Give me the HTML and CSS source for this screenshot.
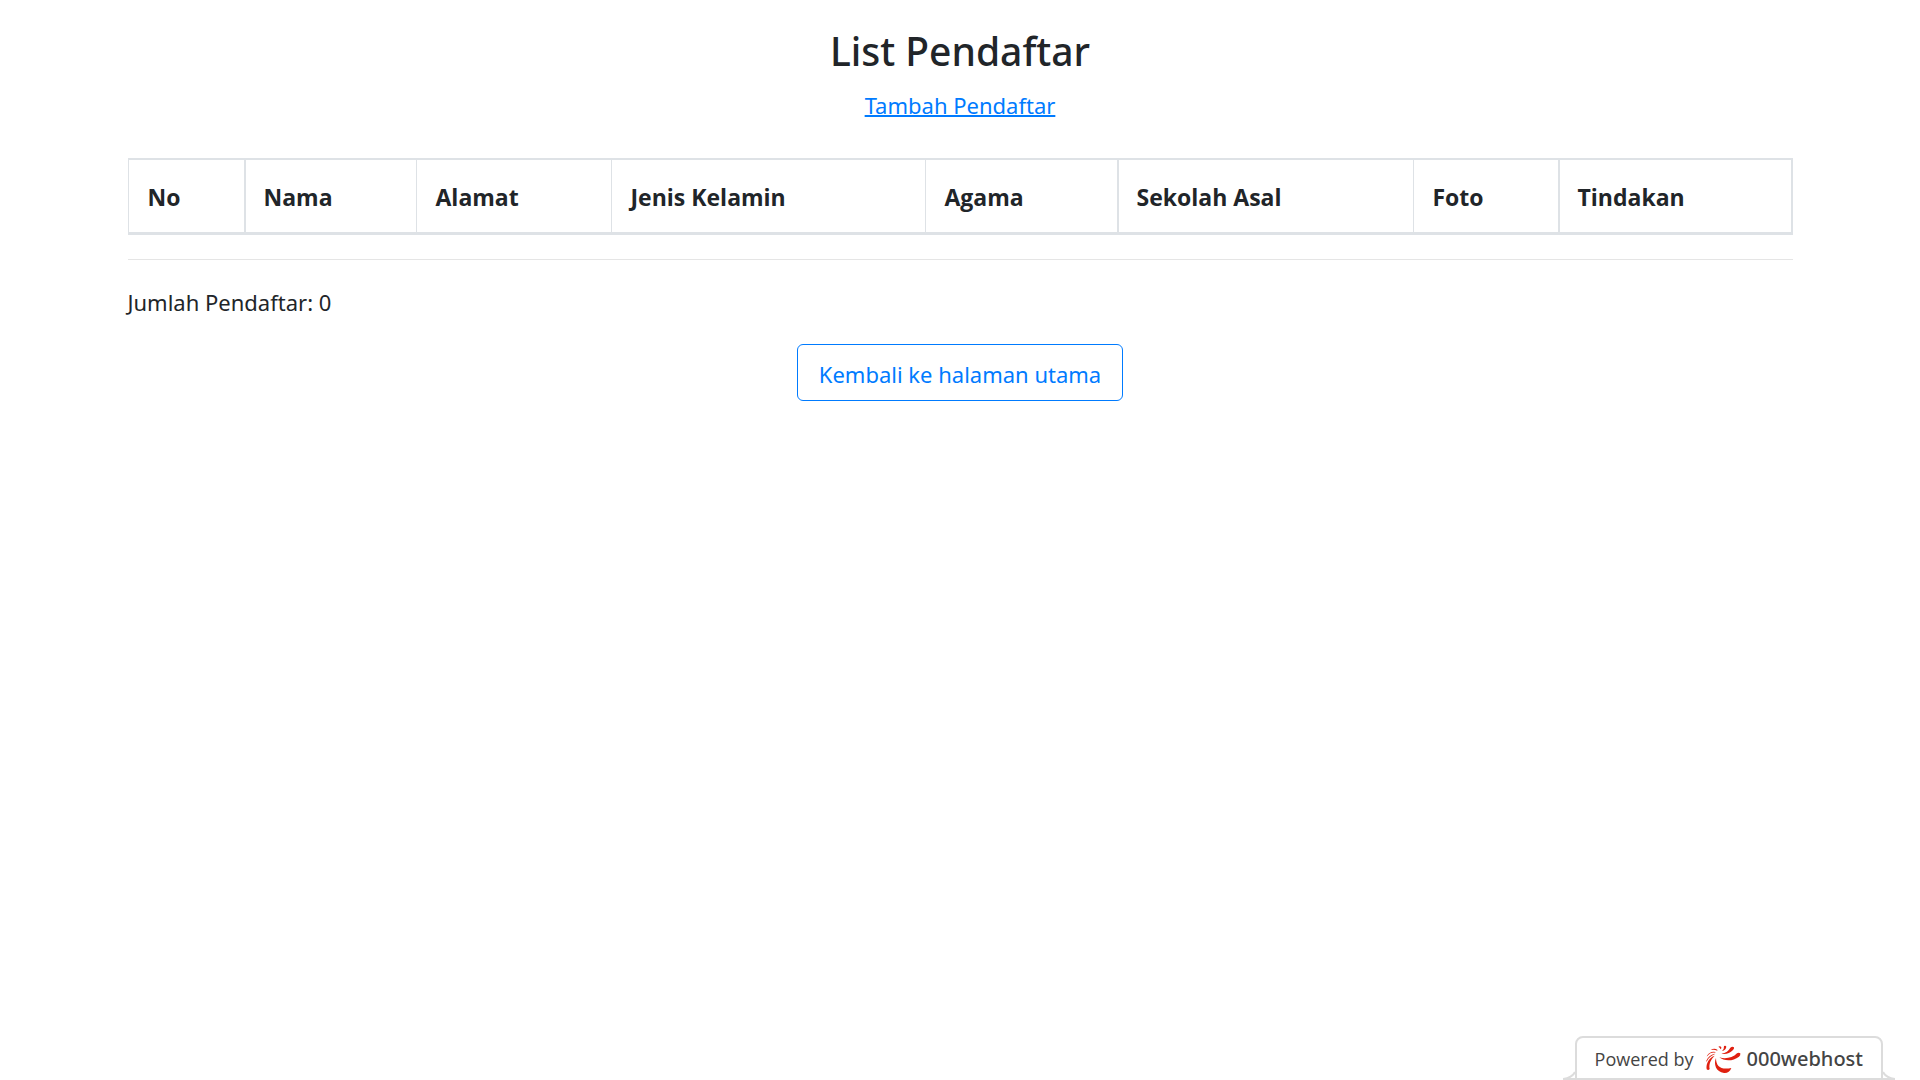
FILE: index.html
```html
<!DOCTYPE html>
<html lang="id">
<head>
<meta charset="utf-8">
<meta name="viewport" content="width=device-width, initial-scale=1">
<title>List Pendaftar</title>
<link rel="stylesheet" href="styles.css">
</head>
<body>
<main class="container">
  <header class="page-header">
    <h1 class="title">List Pendaftar</h1>
    <a class="add-link" href="#tambah">Tambah Pendaftar</a>
  </header>
  <table class="table">
    <colgroup>
      <col class="col-no"><col class="col-nama"><col class="col-alamat"><col class="col-kelamin">
      <col class="col-agama"><col class="col-sekolah"><col class="col-foto"><col class="col-tindakan">
    </colgroup>
    <thead>
      <tr>
        <th scope="col">No</th>
        <th scope="col" class="strong">Nama</th>
        <th scope="col">Alamat</th>
        <th scope="col">Jenis Kelamin</th>
        <th scope="col">Agama</th>
        <th scope="col" class="strong">Sekolah Asal</th>
        <th scope="col">Foto</th>
        <th scope="col" class="strong">Tindakan</th>
      </tr>
    </thead>
  </table>
  <hr class="divider">
  <p class="total">Jumlah Pendaftar: 0</p>
  <div class="actions">
    <button class="btn" type="button">Kembali ke halaman utama</button>
  </div>
</main>
<a class="badge" href="#hosting">
  <svg class="flare" viewBox="0 0 12 44" aria-hidden="true"><path d="M0 43Q9 42 12 36V43z" fill="#fff"/><path d="M0 43H12M0 43Q9 42 12 36" fill="none" stroke="#dcdcdc" stroke-width="2"/></svg>
  <span class="badge-body">
    <span class="powered">Powered by</span>
    <svg class="logo" viewBox="470 70 108 90" aria-hidden="true" fill="#e02010">
      <path d="M503 112C503 138 518 148 549 142C545 153 537 158 527 157C503 154 495 130 503 112z"/>
      <path d="M499 105C487 117 481 130 484 145Q480 150 475 146C472 128 483 110 499 105z"/>
      <path d="M513 110C530 116 553 112 566 98Q571 94 576 98Q577 105 572 108C553 123 526 121 513 110z"/>
      <path d="M519 99C532 97 542 90 546 81Q552 76 557 80Q558 85 554 88C544 98 532 102 519 99z"/>
      <path d="M521 91Q528 86 527 76Q532 73 534 78Q533 88 521 91z"/>
      <path d="M516 86Q517 81 510 78Q516 75 519 80Q520 84 516 86z"/>
      <path d="M507 87Q497 81 487 88Q497 85 507 90z"/>
      <path d="M501 94Q486 91 477 104Q474 109 477 106Q487 94 501 96z"/>
      <path d="M499 99Q481 104 474 120Q473 126 476 121Q483 107 499 101z"/>
    </svg>
    <span class="brand">000webhost</span>
  </span>
  <svg class="flare" viewBox="0 0 12 44" aria-hidden="true"><path d="M12 43Q3 42 0 36V43z" fill="#fff"/><path d="M12 43H0M12 43Q3 42 0 36" fill="none" stroke="#dcdcdc" stroke-width="2"/></svg>
</a>
</body>
</html>
```
FILE: styles.css
```css
* { box-sizing: border-box; }
body {
  margin: 0;
  background: #fff;
  color: #212529;
  font: 400 22px/36px "Noto Sans", "Open Sans", sans-serif;
}
.container {
  max-width: 1709px;
  margin: 0 auto;
  padding: 26px 22px;
}
.page-header {
  text-align: center;
  margin-bottom: 35px;
}
.title {
  margin: 0 0 11px;
  font-size: 39px;
  font-weight: 500;
  line-height: 50px;
}
.add-link {
  display: inline-block;
  color: #007bff;
  text-decoration: underline;
  text-decoration-thickness: 2px;
}
.table {
  width: 100%;
  table-layout: fixed;
  border-collapse: separate;
  border-spacing: 0;
  border: solid #dee2e6;
  border-width: 2px 2px 3px 0;
}
.table th {
  padding: 19px 16px 17px 19px;
  border-left: 1px solid #dee2e6;
  text-align: left;
  font: 700 23px/36px "Open Sans", "Noto Sans", sans-serif;
}
.table .strong {
  padding-left: 18px;
  border-left-width: 2px;
}
.col-no { width: 116px; }
.col-nama { width: 172px; }
.col-alamat { width: 195px; }
.col-kelamin { width: 314px; }
.col-agama { width: 192px; }
.col-sekolah { width: 296px; }
.col-foto { width: 145px; }
.col-tindakan { width: 233px; }
.divider {
  margin: 24px 0;
  border: 0;
  border-top: 1px solid #e5e5e5;
}
.total { margin: 0 0 24px; }
.actions { text-align: center; }
.btn {
  padding: 11px 21px 8px;
  border: 1px solid #007bff;
  border-radius: 6px;
  background: transparent;
  color: #007bff;
  font: inherit;
}
.badge {
  position: fixed;
  right: 25px;
  bottom: 0;
  display: flex;
  color: #444;
  text-decoration: none;
}
.flare {
  width: 12px;
  height: 44px;
}
.badge-body {
  display: flex;
  align-items: center;
  height: 44px;
  padding: 2px 18px 0;
  border: 2px solid #dcdcdc;
  border-radius: 8px 8px 0 0;
  background: #fff;
  font: 400 18px/28px "Open Sans", "Noto Sans", sans-serif;
}
.logo {
  width: 36px;
  height: 30px;
  margin: 0 6px 0 11px;
}
.brand {
  font-family: "Noto Sans", "Open Sans", sans-serif;
  font-size: 20px;
  font-weight: 500;
}
```
